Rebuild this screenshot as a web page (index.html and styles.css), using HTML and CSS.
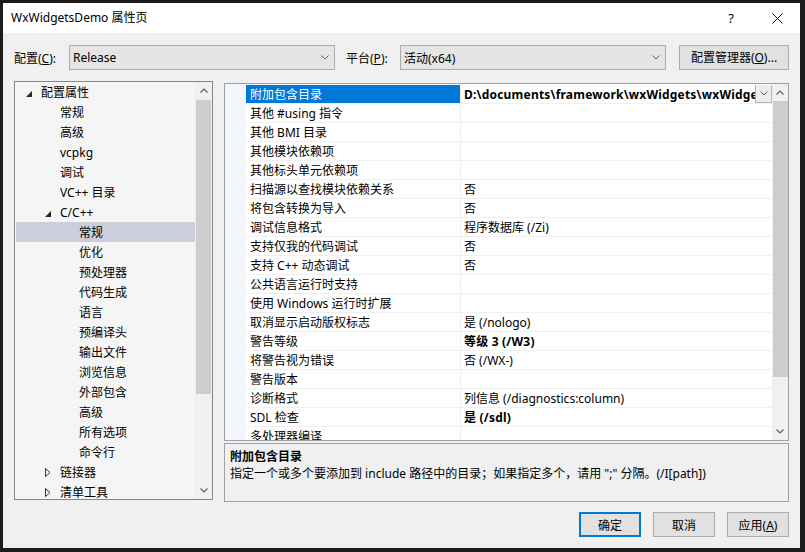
FILE: index.html
```html
<!DOCTYPE html>
<html lang="zh-CN">
<head>
<meta charset="utf-8">
<title>WxWidgetsDemo 属性页</title>
<link rel="stylesheet" href="styles.css">
</head>
<body>
<div class="dialog">
  <div class="titlebar">
    <span class="title">WxWidgetsDemo 属性页</span>
    <div class="caption">
      <span class="cap help">?</span>
      <span class="cap close"><svg width="11" height="11" viewBox="0 0 11 11"><path d="M0.5 0.5 L10.5 10.5 M10.5 0.5 L0.5 10.5" stroke="#111" stroke-width="1" fill="none"/></svg></span>
    </div>
  </div>
  <div class="content">
    <div class="toolbar">
      <span class="lbl">配置(<u>C</u>):</span>
      <div class="combo"><span>Release</span><svg class="chev" width="8" height="5" viewBox="0 0 8 5"><polyline points="0.5,0.5 4,4 7.5,0.5" fill="none" stroke="#606060"/></svg></div>
      <span class="lbl lbl-platform">平台(<u>P</u>):</span>
      <div class="combo"><span>活动(x64)</span><svg class="chev" width="8" height="5" viewBox="0 0 8 5"><polyline points="0.5,0.5 4,4 7.5,0.5" fill="none" stroke="#606060"/></svg></div>
      <button class="btn btn-manager">配置管理器(<u>O</u>)...</button>
    </div>
    <div class="main">
      <div class="tree">
        <div class="tree-items">
          <div class="trow lv0"><span class="tog"><svg class="tri-exp" width="6" height="6" viewBox="0 0 6 6"><polygon points="6,0 6,6 0,6" fill="#262626"/></svg></span>配置属性</div>
          <div class="trow lv1"><span class="tog"></span>常规</div>
          <div class="trow lv1"><span class="tog"></span>高级</div>
          <div class="trow lv1"><span class="tog"></span>vcpkg</div>
          <div class="trow lv1"><span class="tog"></span>调试</div>
          <div class="trow lv1"><span class="tog"></span>VC++ 目录</div>
          <div class="trow lv1"><span class="tog"><svg class="tri-exp" width="6" height="6" viewBox="0 0 6 6"><polygon points="6,0 6,6 0,6" fill="#262626"/></svg></span>C/C++</div>
          <div class="trow lv2 sel"><span class="tog"></span>常规</div>
          <div class="trow lv2"><span class="tog"></span>优化</div>
          <div class="trow lv2"><span class="tog"></span>预处理器</div>
          <div class="trow lv2"><span class="tog"></span>代码生成</div>
          <div class="trow lv2"><span class="tog"></span>语言</div>
          <div class="trow lv2"><span class="tog"></span>预编译头</div>
          <div class="trow lv2"><span class="tog"></span>输出文件</div>
          <div class="trow lv2"><span class="tog"></span>浏览信息</div>
          <div class="trow lv2"><span class="tog"></span>外部包含</div>
          <div class="trow lv2"><span class="tog"></span>高级</div>
          <div class="trow lv2"><span class="tog"></span>所有选项</div>
          <div class="trow lv2"><span class="tog"></span>命令行</div>
          <div class="trow lv1"><span class="tog"><svg class="tri-col" width="6" height="9" viewBox="0 0 6 9"><polygon points="0.5,0.5 5,4.5 0.5,8.5" fill="none" stroke="#333"/></svg></span>链接器</div>
          <div class="trow lv1"><span class="tog"><svg class="tri-col" width="6" height="9" viewBox="0 0 6 9"><polygon points="0.5,0.5 5,4.5 0.5,8.5" fill="none" stroke="#333"/></svg></span>清单工具</div>
        </div>
        <div class="vscroll">
          <div class="sb-btn"><svg width="8" height="5" viewBox="0 0 8 5"><polyline points="0.5,4.5 4,1 7.5,4.5" fill="none" stroke="#606060" stroke-width="1.2"/></svg></div>
          <div class="sb-track"><div class="sb-thumb tree-thumb"></div></div>
          <div class="sb-btn"><svg width="8" height="5" viewBox="0 0 8 5"><polyline points="0.5,0.5 4,4 7.5,0.5" fill="none" stroke="#606060" stroke-width="1.2"/></svg></div>
        </div>
      </div>
      <div class="right">
        <div class="grid">
          <div class="gutter"></div>
          <div class="grid-rows">
            <div class="grow sel"><div class="gname">附加包含目录</div><div class="gval bold"><span class="vtext">D:\documents\framework\wxWidgets\wxWidgets-3.2.4\include</span><span class="ddbtn"><svg width="8" height="5" viewBox="0 0 8 5"><polyline points="0.5,0.5 4,4 7.5,0.5" fill="none" stroke="#606060"/></svg></span></div></div>
            <div class="grow"><div class="gname">其他 #using 指令</div><div class="gval"></div></div>
            <div class="grow"><div class="gname">其他 BMI 目录</div><div class="gval"></div></div>
            <div class="grow"><div class="gname">其他模块依赖项</div><div class="gval"></div></div>
            <div class="grow"><div class="gname">其他标头单元依赖项</div><div class="gval"></div></div>
            <div class="grow"><div class="gname">扫描源以查找模块依赖关系</div><div class="gval">否</div></div>
            <div class="grow"><div class="gname">将包含转换为导入</div><div class="gval">否</div></div>
            <div class="grow"><div class="gname">调试信息格式</div><div class="gval">程序数据库 (/Zi)</div></div>
            <div class="grow"><div class="gname">支持仅我的代码调试</div><div class="gval">否</div></div>
            <div class="grow"><div class="gname">支持 C++ 动态调试</div><div class="gval">否</div></div>
            <div class="grow"><div class="gname">公共语言运行时支持</div><div class="gval"></div></div>
            <div class="grow"><div class="gname">使用 Windows 运行时扩展</div><div class="gval"></div></div>
            <div class="grow"><div class="gname">取消显示启动版权标志</div><div class="gval">是 (/nologo)</div></div>
            <div class="grow"><div class="gname">警告等级</div><div class="gval bold">等级 3 (/W3)</div></div>
            <div class="grow"><div class="gname">将警告视为错误</div><div class="gval">否 (/WX-)</div></div>
            <div class="grow"><div class="gname">警告版本</div><div class="gval"></div></div>
            <div class="grow"><div class="gname">诊断格式</div><div class="gval">列信息 (/diagnostics:column)</div></div>
            <div class="grow"><div class="gname">SDL 检查</div><div class="gval bold">是 (/sdl)</div></div>
            <div class="grow"><div class="gname">多处理器编译</div><div class="gval"></div></div>
          </div>
          <div class="vscroll grid-scroll">
            <div class="sb-btn"><svg width="8" height="5" viewBox="0 0 8 5"><polyline points="0.5,4.5 4,1 7.5,4.5" fill="none" stroke="#606060" stroke-width="1.2"/></svg></div>
            <div class="sb-track"><div class="sb-thumb grid-thumb"></div></div>
            <div class="sb-btn"><svg width="8" height="5" viewBox="0 0 8 5"><polyline points="0.5,0.5 4,4 7.5,0.5" fill="none" stroke="#606060" stroke-width="1.2"/></svg></div>
          </div>
        </div>
        <div class="desc">
          <div class="desc-title">附加包含目录</div>
          <div class="desc-text">指定一个或多个要添加到 include 路径中的目录；如果指定多个，请用 ";" 分隔。(/I[path])</div>
        </div>
      </div>
    </div>
    <div class="footer">
      <button class="btn btn-foot btn-default">确定</button>
      <button class="btn btn-foot">取消</button>
      <button class="btn btn-foot">应用(<u>A</u>)</button>
    </div>
  </div>
</div>
</body>
</html>
```

FILE: styles.css
```css
* { box-sizing: border-box; }
html, body { margin: 0; padding: 0; }
body {
  width: 805px;
  height: 552px;
  overflow: hidden;
  background: #1c1c1c;
  font-family: "Noto Sans", "Noto Sans CJK SC", sans-serif;
  font-size: 12px;
  color: #000;
}
.dialog {
  margin: 3px 0 0 3px;
  width: 797px;
  height: 545px;
  background: #f0f0f0;
  display: flex;
  flex-direction: column;
}
.titlebar {
  height: 30px;
  background: #fff;
  display: flex;
  align-items: center;
}
.title {
  flex: 1;
  padding-left: 8px;
  line-height: 16px;
}
.caption { display: flex; height: 30px; }
.cap {
  width: 46px;
  height: 30px;
  display: flex;
  align-items: center;
  justify-content: center;
  font-size: 13px;
}
.content {
  flex: 1;
  padding: 12px 11px 0 11px;
  display: flex;
  flex-direction: column;
}
.toolbar {
  display: flex;
  align-items: center;
  height: 25px;
}
.lbl { width: 55px; white-space: nowrap; }
.lbl-platform { margin-left: 11px; width: 54px; }
.combo {
  width: 266px;
  height: 25px;
  background: #e5e5e5;
  border: 1px solid #acacac;
  display: flex;
  align-items: center;
  justify-content: space-between;
  padding: 0 5px 0 3px;
}
.btn {
  font: inherit;
  color: #000;
  background: #e1e1e1;
  border: 1px solid #adadad;
  height: 25px;
  padding: 0;
  white-space: nowrap;
}
.btn-manager { margin-left: 13px; width: 110px; margin-top: -1px; }
.main {
  margin-top: 11px;
  display: flex;
  height: 421px;
}
.tree {
  width: 199px;
  height: 419px;
  border: 1px solid #828790;
  background: #f5f5f5;
  display: flex;
}
.tree-items { flex: 1; overflow: hidden; padding-left: 1px; }
.trow {
  height: 20px;
  display: flex;
  align-items: center;
  white-space: nowrap;
}
.trow.sel { background: #cccedb; }
.tog {
  width: 25px;
  height: 20px;
  flex: none;
  display: flex;
  align-items: center;
  justify-content: flex-end;
  padding-right: 9px;
}
.lv0 { padding-left: 0; }
.lv1 { padding-left: 19px; }
.lv2 { padding-left: 38px; }
.tri-exp { margin-top: 4px; }
.vscroll {
  width: 17px;
  flex: none;
  display: flex;
  flex-direction: column;
  background: #f0f0f0;
}
.sb-btn {
  height: 17px;
  flex: none;
  display: flex;
  align-items: center;
  justify-content: center;
}
.sb-track { flex: 1; }
.sb-thumb { background: #cdcdcd; margin: 1px 1px 0 1px; }
.tree-thumb { height: 294px; }
.right {
  margin-left: 11px;
  width: 565px;
  display: flex;
  flex-direction: column;
}
.grid {
  margin-top: 2px;
  height: 358px;
  border: 1px solid #a0a0a0;
  background: #fff;
  display: flex;
}
.gutter { width: 21px; flex: none; background: #f3f6fb; }
.grid-rows { flex: 1; padding-top: 1px; overflow: hidden; }
.grow { height: 19px; display: flex; }
.gname {
  width: 214px;
  height: 19px;
  flex: none;
  padding: 1px 0 0 4px;
  line-height: 17px;
  border-bottom: 1px solid #f0f0f0;
  white-space: nowrap;
  overflow: hidden;
}
.grow.sel .gname { background: #0078d7; color: #fff; }
.gval {
  flex: 1;
  min-width: 0;
  height: 19px;
  display: flex;
  align-items: center;
  padding: 1px 0 0 3px;
  line-height: 17px;
  border-left: 1px solid #f0f0f0;
  border-bottom: 1px solid #f0f0f0;
  white-space: nowrap;
  overflow: hidden;
}
.bold { font-weight: bold; letter-spacing: 0.2px; }
.vtext { flex: 1; min-width: 0; overflow: hidden; }
.ddbtn {
  width: 17px;
  height: 19px;
  flex: none;
  margin-top: -2px;
  border: 1px solid #b4b4b4;
  background: #ececec;
  display: flex;
  align-items: center;
  justify-content: center;
}
.grid-scroll { width: 16px; }
.grid-scroll .sb-thumb { margin: 0 0 0 1px; }
.grid-thumb { height: 276px; }
.desc {
  margin-top: 2px;
  height: 59px;
  border: 1px solid #a0a0a0;
  padding: 4px 5px 0 5px;
  background: #f0f0f0;
}
.desc-title { font-weight: bold; line-height: 17px; }
.desc-text { line-height: 17px; white-space: nowrap; }
.footer {
  margin-top: 10px;
  display: flex;
  justify-content: flex-end;
  gap: 12px;
}
.btn-foot { width: 62px; }
.btn-default { border: 2px solid #0078d7; }
```
